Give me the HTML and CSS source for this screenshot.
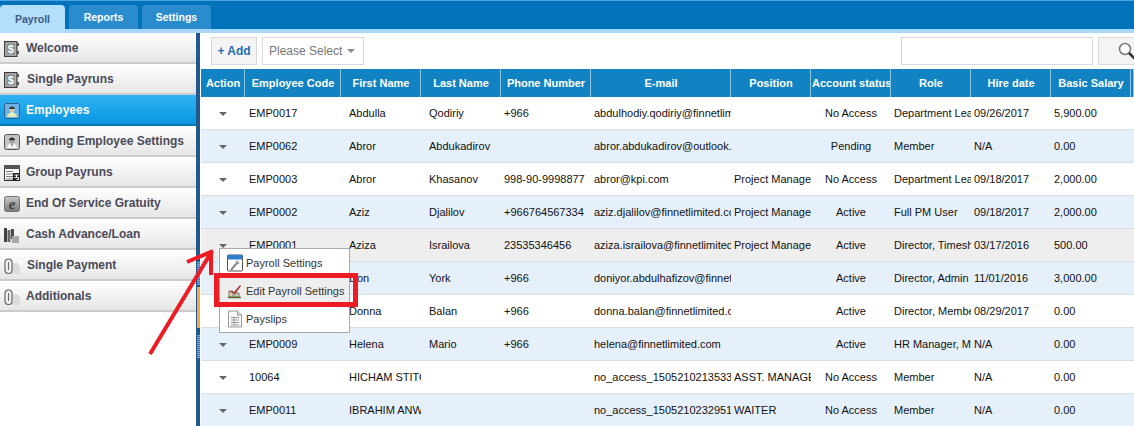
FILE: index.html
```html
<!DOCTYPE html>
<html lang="en">
<head>
<meta charset="utf-8">
<title>Payroll - Employees</title>
<link rel="stylesheet" href="styles.css">
</head>
<body>
<header class="topbar">
  <nav class="tabs">
    <a class="tab tab-active">Payroll</a>
    <a class="tab">Reports</a>
    <a class="tab">Settings</a>
  </nav>
</header>
<div class="shell">
  <aside class="sidebar">
    <a class="side-item"><svg class="ic" viewBox="0 0 16 16"><rect x="0.500" y="0.500" width="12.500" height="15" fill="#8c8c8c" stroke="#3c3c3c"/><rect x="2" y="2" width="9.500" height="12" fill="none" stroke="#b5b5b5"/><rect x="13" y="2" width="2" height="3" fill="#555"/><rect x="13" y="10" width="2" height="3" fill="#555"/><text x="6.700" y="12" class="ic-t">$</text></svg><span>Welcome</span></a>
    <a class="side-item"><svg class="ic" viewBox="0 0 16 16"><rect x="0.500" y="0.500" width="12.500" height="15" fill="#8c8c8c" stroke="#3c3c3c"/><rect x="2" y="2" width="9.500" height="12" fill="none" stroke="#b5b5b5"/><rect x="13" y="2" width="2" height="3" fill="#555"/><rect x="13" y="10" width="2" height="3" fill="#555"/><text x="6.700" y="12" class="ic-t">$</text></svg><span class="shift">Single Payruns</span></a>
    <a class="side-item side-active"><svg class="ic" viewBox="0 0 16 16"><rect x="0.500" y="0.500" width="15" height="15" rx="2" fill="#6fb2e6" stroke="#2f5f86"/><path d="M3 14c0-3 2-4.500 5-4.500s5 1.500 5 4.500z" fill="#dcefb0"/><path d="M6.700 9.500L8 13l1.300-3.500z" fill="#fff"/><circle cx="8" cy="6.500" r="2.500" fill="#e9c8a0"/><path d="M5 6c0-3.500 6-3.500 6 0z" fill="#2f3a2f"/></svg><span>Employees</span></a>
    <a class="side-item"><svg class="ic" viewBox="0 0 16 16"><rect x="0.500" y="0.500" width="15" height="15" rx="2" fill="#c4c4c4" stroke="#555"/><path d="M3 14c0-3 2-4.500 5-4.500s5 1.500 5 4.500z" fill="#f4f4f4"/><path d="M6.700 9.500L8 13l1.300-3.500z" fill="#888"/><circle cx="8" cy="6.500" r="2.500" fill="#999"/><path d="M5 6c0-3.500 6-3.500 6 0z" fill="#2c2c2c"/></svg><span>Pending Employee Settings</span></a>
    <a class="side-item"><svg class="ic" viewBox="0 0 16 16"><rect x="0.500" y="0.500" width="15" height="15" fill="#fff" stroke="#333"/><rect x="0" y="0" width="16" height="4" fill="#555"/><path d="M2 6.500h7M2 9h7M2 11.500h7M2 14h7" stroke="#777"/><rect x="9" y="8" width="7" height="8" fill="#222"/><path d="M10.500 10h4M12.500 10v2.500M10.500 12.500h4v2h-2" stroke="#fff" fill="none"/></svg><span>Group Payruns</span></a>
    <a class="side-item"><svg class="ic" viewBox="0 0 16 16"><defs><linearGradient id="eg" x1="0" y1="0" x2="0" y2="1"><stop offset="0" stop-color="#c8c8c8"/><stop offset="1" stop-color="#777"/></linearGradient></defs><rect x="0.500" y="0.500" width="15" height="15" rx="2" fill="url(#eg)" stroke="#777"/><text x="8" y="12.500" class="ic-e">e</text></svg><span>End Of Service Gratuity</span></a>
    <a class="side-item"><svg class="ic" viewBox="0 0 16 16"><path d="M0 1h3v14H0z" fill="#3f3f3f"/><path d="M3.500 3h3v12h-3z" fill="#666"/><path d="M7 2h3v10H7z" fill="#4a4a4a"/><path d="M8 9h7v7H8z" fill="#a8a8a8"/></svg><span>Cash Advance/Loan</span></a>
    <a class="side-item"><svg class="ic" viewBox="0 0 16 16"><path d="M7 16V5h6l3 3v8z" fill="#dcdcdc"/><path d="M1 12V4.500a3.500 3.500 0 0 1 7 0V12a3.500 3.500 0 0 1-7 0z" fill="#f3f3f3" stroke="#6a6a6a" stroke-width="1.200"/><path d="M4.500 4v8" stroke="#6a6a6a" stroke-width="1.200"/></svg><span class="shift">Single Payment</span></a>
    <a class="side-item"><svg class="ic" viewBox="0 0 16 16"><path d="M7 16V5h6l3 3v8z" fill="#dcdcdc"/><path d="M1 12V4.500a3.500 3.500 0 0 1 7 0V12a3.500 3.500 0 0 1-7 0z" fill="#f3f3f3" stroke="#6a6a6a" stroke-width="1.200"/><path d="M4.500 4v8" stroke="#6a6a6a" stroke-width="1.200"/></svg><span>Additionals</span></a>
  </aside>
  <div class="divider">
    <div class="grip grip-top"></div>
    <div class="grip-handle"></div>
    <div class="grip grip-bottom"></div>
  </div>
  <main class="main">
    <div class="toolbar">
      <button class="btn-add">+ Add</button>
      <div class="select"><span>Please Select</span><i class="caret caret-light"></i></div>
      <div class="search">
        <input class="search-input" type="text" aria-label="Search">
        <button class="btn-search" aria-label="Search"><svg viewBox="0 0 20 20" width="20" height="20"><circle cx="8" cy="8" r="5.500" fill="#fff" stroke="#777" stroke-width="1.500"/><path d="M12 12l6 6" stroke="#333" stroke-width="2.500"/></svg></button>
      </div>
    </div>
    <table class="grid">
      <colgroup>
        <col class="c-action"><col class="c-code"><col class="c-name"><col class="c-name"><col class="c-phone"><col class="c-email"><col class="c-name"><col class="c-name"><col class="c-name"><col class="c-name"><col class="c-name"><col class="c-rest">
      </colgroup>
      <thead>
        <tr><th>Action</th><th>Employee Code</th><th>First Name</th><th>Last Name</th><th>Phone Number</th><th>E-mail</th><th>Position</th><th>Account status</th><th>Role</th><th>Hire date</th><th>Basic Salary</th><th></th></tr>
      </thead>
      <tbody>
        <tr><td class="act"><i class="caret"></i></td><td class="cd">EMP0017</td><td class="nm">Abdulla</td><td class="nm">Qodiriy</td><td>+966</td><td>abdulhodiy.qodiriy@finnetlimited.com</td><td></td><td class="mid">No Access</td><td>Department Lead</td><td>09/26/2017</td><td>5,900.00</td><td></td></tr>
        <tr><td class="act"><i class="caret"></i></td><td class="cd">EMP0062</td><td class="nm">Abror</td><td class="nm">Abdukadirov</td><td></td><td>abror.abdukadirov@outlook.com</td><td></td><td class="mid">Pending</td><td>Member</td><td>N/A</td><td>0.00</td><td></td></tr>
        <tr><td class="act"><i class="caret"></i></td><td class="cd">EMP0003</td><td class="nm">Abror</td><td class="nm">Khasanov</td><td>998-90-9998877</td><td>abror@kpi.com</td><td>Project Manager</td><td class="mid">No Access</td><td>Department Lead</td><td>09/18/2017</td><td>2,000.00</td><td></td></tr>
        <tr><td class="act"><i class="caret"></i></td><td class="cd">EMP0002</td><td class="nm">Aziz</td><td class="nm">Djalilov</td><td>+966764567334</td><td>aziz.djalilov@finnetlimited.com</td><td>Project Manager</td><td class="mid">Active</td><td>Full PM User</td><td>09/18/2017</td><td>2,000.00</td><td></td></tr>
        <tr class="row-sel"><td class="act"><i class="caret"></i></td><td class="cd">EMP0001</td><td class="nm">Aziza</td><td class="nm">Israilova</td><td>23535346456</td><td>aziza.israilova@finnetlimited.com</td><td>Project Manager</td><td class="mid">Active</td><td>Director, Timesheet</td><td>03/17/2016</td><td>500.00</td><td></td></tr>
        <tr><td class="act"><i class="caret"></i></td><td class="cd">EMP0005</td><td class="nm">Don</td><td class="nm">York</td><td>+966</td><td>doniyor.abdulhafizov@finnetlimited.com</td><td></td><td class="mid">Active</td><td>Director, Admin</td><td>11/01/2016</td><td>3,000.00</td><td></td></tr>
        <tr><td class="act"><i class="caret"></i></td><td class="cd">EMP0007</td><td class="nm">Donna</td><td class="nm">Balan</td><td>+966</td><td>donna.balan@finnetlimited.com</td><td></td><td class="mid">Active</td><td>Director, Member</td><td>08/29/2017</td><td>0.00</td><td></td></tr>
        <tr><td class="act"><i class="caret"></i></td><td class="cd">EMP0009</td><td class="nm">Helena</td><td class="nm">Mario</td><td>+966</td><td>helena@finnetlimited.com</td><td></td><td class="mid">Active</td><td>HR Manager, Member</td><td>N/A</td><td>0.00</td><td></td></tr>
        <tr><td class="act"><i class="caret"></i></td><td class="cd">10064</td><td class="nm">HICHAM STITOU</td><td class="nm"></td><td></td><td>no_access_1505210213533</td><td>ASST. MANAGER</td><td class="mid">No Access</td><td>Member</td><td>N/A</td><td>0.00</td><td></td></tr>
        <tr><td class="act"><i class="caret"></i></td><td class="cd">EMP0011</td><td class="nm">IBRAHIM ANWAR</td><td class="nm"></td><td></td><td>no_access_1505210232951</td><td>WAITER</td><td class="mid">No Access</td><td>Member</td><td>N/A</td><td>0.00</td><td></td></tr>
      </tbody>
    </table>
  </main>
</div>
<div class="menu">
  <a class="menu-item"><svg class="mi" viewBox="0 0 18 18"><rect x="1.500" y="1" width="15" height="16" rx="1" fill="#fff" stroke="#555"/><rect x="1.500" y="1" width="15" height="4.500" rx="1" fill="#2f7fd0"/><path d="M5 16l5-6" stroke="#888" stroke-width="2"/><path d="M9.500 9.500a2.500 2.500 0 0 1 3-3l-1.500 1.500 1 1 1.500-1.500a2.500 2.500 0 0 1-3 3z" fill="#888"/></svg><span>Payroll Settings</span></a>
  <a class="menu-item menu-hover"><svg class="mi" viewBox="0 0 18 18"><path d="M3 15V9h4v6zM9 15v-4h4v4z" fill="#d8d2ae" stroke="#777"/><path d="M4 9l4 1 6-7 1 1-6 8-5-2z" fill="#b3322c"/><path d="M2 15.500h13" stroke="#556b2f" stroke-width="1.500"/></svg><span>Edit Payroll Settings</span></a>
  <a class="menu-item"><svg class="mi" viewBox="0 0 18 18"><path d="M2.500 1h9l4 4v12h-13z" fill="#f7f7f7" stroke="#999"/><path d="M11.500 1v4h4" fill="#ddd" stroke="#999"/><path d="M5 7.500h8M5 10h8M5 12.500h8M5 15h8M8 7.500v7.500" stroke="#9a9a9a"/></svg><span>Payslips</span></a>
</div>
<svg class="annotation" viewBox="0 0 1134 426" width="1134" height="426" aria-hidden="true">
  <rect x="216.500" y="275.500" width="139" height="29" fill="none" stroke="#ed1c24" stroke-width="5"/>
  <path d="M150 354L212 251" fill="none" stroke="#ed1c24" stroke-width="4"/>
  <path d="M187 262L213 251" fill="none" stroke="#ed1c24" stroke-width="4"/>
  <path d="M211 251V275" fill="none" stroke="#ed1c24" stroke-width="4"/>
</svg>
</body>
</html>
```
FILE: styles.css
```css
* { box-sizing: border-box; }
html, body { margin: 0; height: 426px; overflow: hidden; background: #fff; }
body { font-family: "Liberation Sans", Arial, sans-serif; font-size: 11px; color: #111; position: relative; }

.topbar { height: 33px; background: #0273ba; border-top: 1px solid #4aa3dc; border-bottom: 4px solid #a7d8fa; padding-top: 4px; }
.tabs { display: flex; gap: 4px; height: 24px; }
.tab { width: 69px; display: flex; align-items: center; justify-content: center; background: #2a8ccd; color: #fff; font-size: 10.500px; font-weight: bold; border-radius: 4px 4px 0 0; }
.tab:first-child { width: 65px; }
.tab-active { background: #b3dffb; color: #3b5a85; height: 28px; }

.shell { display: flex; height: 393px; }
.sidebar { width: 196px; flex: none; background: #fff; }
.side-item { height: 31px; display: flex; align-items: center; gap: 6px; padding: 0 0 0 4px; background: linear-gradient(#ffffff, #e6e6e6); border-bottom: 2px solid #cdcaca; color: #4a4a58; font-size: 12px; font-weight: bold; }
.side-active { background: linear-gradient(#30b2f3, #0a97e2); border-bottom-color: #0878b8; color: #fff; }
.shift { margin-left: 1px; }
.ic { width: 16px; height: 16px; flex: none; margin-top: 2px; }
.ic-t { font-family: "Liberation Sans", sans-serif; font-size: 11px; fill: #fff; text-anchor: middle; }
.ic-e { font-family: "Liberation Serif", serif; font-style: italic; font-size: 15px; fill: #444; text-anchor: middle; }

.divider { width: 4px; flex: none; background: #23588f; display: flex; flex-direction: column; padding-top: 229px; }
.grip { height: 23px; width: 3px; margin-left: 1px; background: repeating-linear-gradient(#7ea6d6 0 1px, #3a72b4 1px 2px); }
.grip-handle { height: 41px; width: 3px; margin: 2px 0 7px 1px; background: #f6a93b; }

.main { flex: 1; min-width: 0; padding-left: 1px; overflow: hidden; }
.toolbar { height: 36px; display: flex; align-items: flex-start; gap: 5px; padding: 4px 0 0 10px; }
.btn-add { width: 46px; height: 28px; padding: 0; background: #f4f4f4; border: 1px solid #d8d8d8; color: #1f6fb2; font: bold 12px "Liberation Sans", Arial, sans-serif; }
.select { width: 102px; height: 28px; display: flex; align-items: center; justify-content: space-between; padding: 0 8px 0 6px; border: 1px solid #d8d8d8; color: #777; font-size: 12px; }
.search { margin-left: auto; display: flex; gap: 5px; }
.search-input { width: 192px; height: 28px; border: 1px solid #d8d8d8; padding: 0; background: #fff; }
.btn-search { width: 36px; height: 28px; padding: 3px 0 0 18px; background: #f4f4f4; border: 1px solid #dcdcdc; border-right: 0; overflow: hidden; }

.grid { table-layout: fixed; border-collapse: separate; border-spacing: 0; width: 933px; }
.c-action { width: 44px; }
.c-code { width: 96px; }
.c-name { width: 80px; }
.c-phone { width: 90px; }
.c-email { width: 140px; }
.c-rest { width: 3px; }
.grid th { height: 28px; padding: 0 0 0 1px; background: #1283c2; color: #fff; font-size: 11px; font-weight: bold; text-align: center; white-space: nowrap; overflow: hidden; border-right: 1px solid #8fc1e0; }
.grid td { height: 33px; padding: 0 0 0 3px; white-space: nowrap; overflow: hidden; border-bottom: 1px solid #d8dde3; font-size: 11px; color: #111; }
.grid tbody tr:nth-child(even) td { background: #e6f0fb; }
.grid tbody tr.row-sel td { background: #eeeeee; }
.grid td.act { padding: 0; text-align: center; }
.grid td.mid { text-align: center; padding: 0; }
.grid td.cd { padding-left: 4px; }
.grid td.nm { padding: 0 6px 0 8px; }

.caret { display: inline-block; width: 0; height: 0; border-left: 4px solid transparent; border-right: 4px solid transparent; border-top: 4px solid #666; vertical-align: middle; }
.caret-light { border-top-color: #888; }

.menu { position: absolute; left: 219px; top: 248px; width: 131px; height: 85px; background: #fff; border: 1px solid #a8a8a8; display: flex; flex-direction: column; overflow: hidden; }
.menu-item { flex: none; height: 28px; display: flex; align-items: center; gap: 2px; padding-left: 6px; font-size: 11px; color: #333; }
.menu-hover { background: #eeeeee; }
.mi { width: 18px; height: 18px; flex: none; }
.annotation { position: absolute; left: 0; top: 0; pointer-events: none; }
```
